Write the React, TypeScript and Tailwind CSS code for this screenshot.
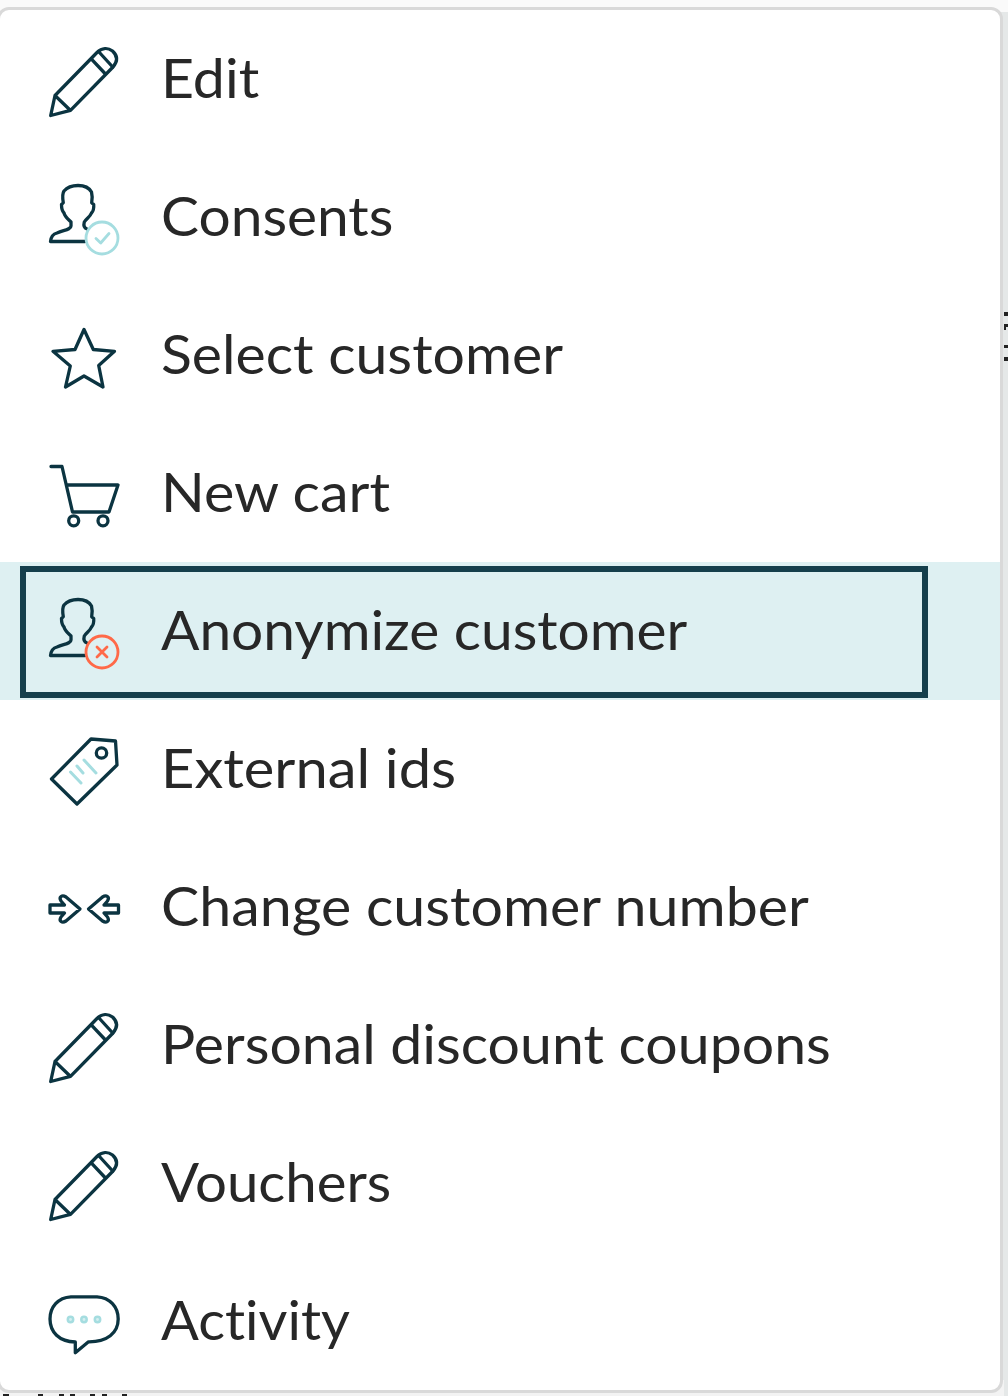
import React from 'react';

const INK = '#0b3441';
const TEAL = '#a5dde0';

function Pencil() {
  return (
    <g>
      <path d="M55 95.500 L97 52.500 C102 47.500 108 47.500 112.500 51 C117.500 55.500 118 61 113 67 L70.500 110.300 L50.700 115.500 Z M55.500 96 L70 110" />
      <path d="M91.700 59.300 L105 73.500 M99 52 L112.700 67" />
    </g>
  );
}

function Person({ children }: { children: React.ReactNode }) {
  return (
    <g>
      <path d="M85 241.500 H50.500 C51 237 53 234 57 233 C64 230 71 229.500 71 226 V222 C68 219 65 217 64 213 C62 211 61.500 209 61.500 204.500 L63.300 202.700 C62.500 198 62 194 64 191 C67 187.500 72 185.500 78 185.500 C84 185.500 89 187.500 91.500 192 C92.300 195 92.300 199 91.700 202.700 L93.700 204.500 C94 208 93.500 211 91.500 213 C90 217 86 219 84.300 222 C83.500 225 84 228 87 229" />
      <g strokeWidth="2.800">{children}</g>
    </g>
  );
}

type Item = { label: string; stretch: string; icon: React.ReactNode; active?: boolean };

const items: Item[] = [
  { label: 'Edit', stretch: 'scale-x-[1.06]', icon: <Pencil /> },
  {
    label: 'Consents',
    stretch: 'scale-x-[1.053]',
    icon: (
      <g transform="translate(0 -138)">
        <Person>
          <g stroke={TEAL}>
            <circle cx="102" cy="238" r="16" />
            <path d="M96 238.500 L100.700 243 L109 233.500" />
          </g>
        </Person>
      </g>
    ),
  },
  {
    label: 'Select customer',
    stretch: 'scale-x-[1.059]',
    icon: (
      <path
        transform="translate(0 -276)"
        d="M84 329.500 L93.300 349.500 L114.500 351.300 L98.700 365.500 L103 387 L84 376 L65.500 387 L70.300 366 L53 351.300 L75 349.500 Z"
      />
    ),
  },
  {
    label: 'New cart',
    stretch: 'scale-x-[1.063]',
    icon: (
      <g transform="translate(0 -414)">
        <path d="M51 466.500 H62 L72.500 512 H109 L118 485 H67" />
        <circle cx="73.700" cy="520.800" r="5" />
        <circle cx="103" cy="520.800" r="5" />
      </g>
    ),
  },
  {
    label: 'Anonymize customer',
    stretch: 'scale-x-[1.053]',
    active: true,
    icon: (
      <g transform="translate(0 -138)">
        <Person>
          <g stroke="#ff6948">
            <circle cx="102" cy="238" r="16" />
            <path d="M97 233 L107 243 M107 233 L97 243" />
          </g>
        </Person>
      </g>
    ),
  },
  {
    label: 'External ids',
    stretch: 'scale-x-[1.071]',
    icon: (
      <g transform="translate(0 -690)">
        <path d="M51.500 779 L91 739 L115.500 741 L117 765 L77 804 Z" />
        <circle cx="101.500" cy="753" r="5.200" />
        <path stroke={TEAL} strokeWidth="3" d="M84 760 L96 773 M77 766 L83 773 M70.500 772 L81 783" />
      </g>
    ),
  },
  {
    label: 'Change customer number',
    stretch: 'scale-x-[1.061]',
    icon: (
      <g transform="translate(0 -828)">
        <path d="M50 905 H64.500 L61 901 C58.500 897 62 894.500 66 897 L80 909 L66 921 C62 923.500 58.500 921 61 917 L64.500 913 H50 Z" />
        <path d="M118.500 905 H104 L107.500 901 C110 897 106.500 894.500 102.500 897 L88.500 909 L102.500 921 C106.500 923.500 110 921 107.500 917 L104 913 H118.500 Z" />
      </g>
    ),
  },
  { label: 'Personal discount coupons', stretch: 'scale-x-[1.059]', icon: <Pencil /> },
  { label: 'Vouchers', stretch: 'scale-x-[1.044]', icon: <Pencil /> },
  {
    label: 'Activity',
    stretch: 'scale-x-[1.038]',
    icon: (
      <g transform="translate(0 -1242)">
        <path d="M71 1296.800 H97 C110 1297.500 118.200 1307 118.200 1319 C118.200 1333 107 1342 88.500 1341.800 L75.300 1352.800 V1342 C59 1341.500 50 1332 50 1319 C50 1307 58 1297.500 71 1296.800 Z" />
        <g stroke={TEAL} strokeWidth="2.500" fill="#d5eff0">
          <circle cx="70.500" cy="1319.500" r="2.700" />
          <circle cx="84" cy="1319.500" r="2.700" />
          <circle cx="97.500" cy="1319.500" r="2.700" />
        </g>
      </g>
    ),
  },
];

function MenuItem({ item }: { item: Item }) {
  return (
    <li className={`relative flex h-[138px] items-center ${item.active ? 'bg-[#def0f2]' : ''}`}>
      <svg
        className="h-[138px] w-[160.5px] shrink-0"
        viewBox="0 10 160.5 138"
        fill="none"
        stroke={INK}
        strokeWidth="3.300"
        strokeLinejoin="round"
        strokeLinecap="round"
      >
        {item.icon}
      </svg>
      <span
        className={`-mt-0.5 origin-left whitespace-pre text-[54px] leading-none [font-variant-ligatures:none] ${item.stretch}`}
      >
        {item.label}
      </span>
      {item.active && <span className="absolute left-5 top-1 h-[132px] w-[908px] border-[6px] border-[#153f4c]" />}
    </li>
  );
}

export default function App() {
  return (
    <div className="relative h-[1396px] w-[1008px] overflow-hidden bg-[#e5e8e8] font-['Lato',sans-serif] text-[#272727]">
      <div className="absolute left-0 top-0 h-3 w-full bg-[#fafafa]" />
      <div className="absolute bottom-0 left-0 h-4 w-[1004px] bg-[#f3f3f3]" />
      <ul className="absolute left-[-3px] top-[7px] h-[1386px] w-[1006px] rounded-xl border-[3px] border-[#d9d9d9] bg-white">
        {items.map((item) => (
          <MenuItem key={item.label} item={item} />
        ))}
      </ul>
      <svg className="absolute bottom-0 left-0 h-[3px] w-[140px]" viewBox="0 0 140 3" fill="#222">
        <path d="M3 1h6v2h-6z M38 1h5v2h-5z M59 1h5v2h-5z M70 1h5v2h-5z M90 1h5v2h-5z M102 1h5v2h-5z M122 1h5v2h-5z" />
      </svg>
      <svg className="absolute right-0 top-[310px] h-[54px] w-1" viewBox="0 0 4 54" fill="#222">
        <path d="M0 2h4v4H0z M0 14h4v3H2v3H0z M0 35h4v3H0z M0 47h4v4H0z" />
      </svg>
    </div>
  );
}
